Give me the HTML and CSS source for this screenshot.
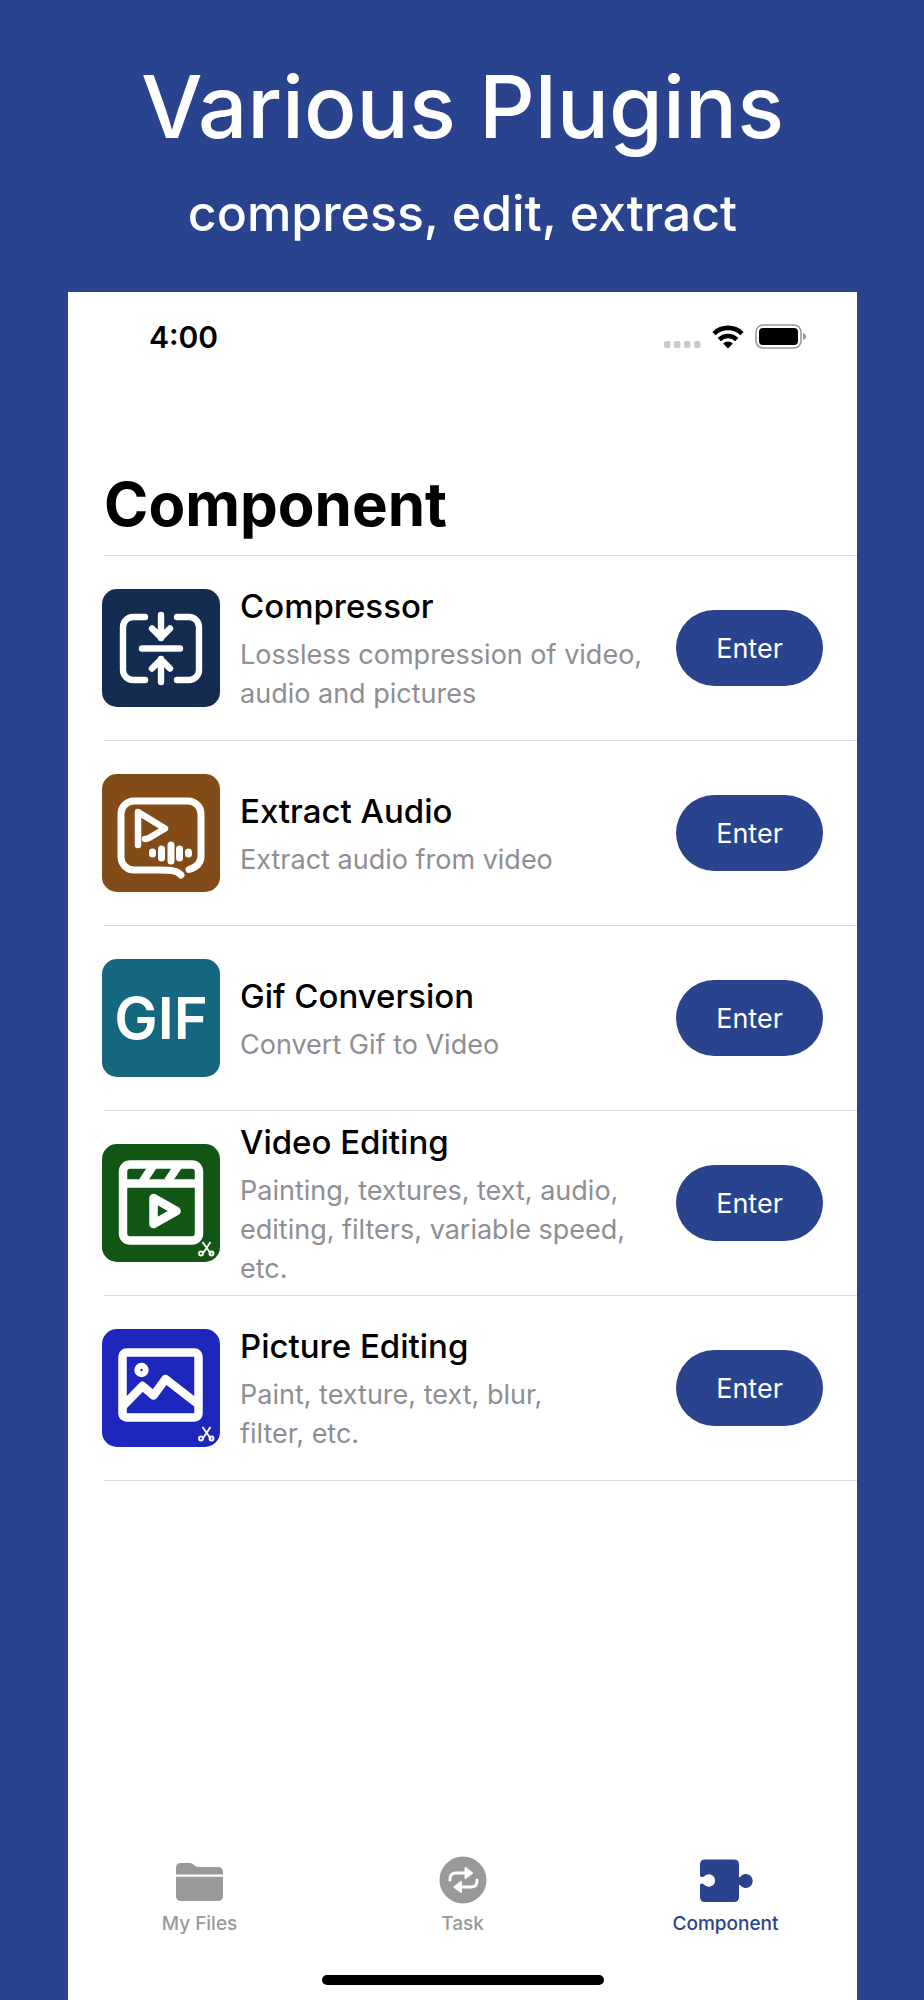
FILE: index.html
```html
<!DOCTYPE html>
<html lang="en">

<head>
    <meta charset="UTF-8">
    <meta name="viewport" content="width=device-width, initial-scale=1.0">
    <title>Various Plugins</title>
    <link rel="stylesheet" href="styles.css">
</head>

<body>
    <header class="banner">
        <h1>Various Plugins</h1>
        <p>compress, edit, extract</p>
    </header>

    <div class="phone">
        <div class="status">
            <span class="time">4:00</span>
            <svg class="signal" width="37" height="8" viewBox="0 0 37 8" fill="#cacaca">
                <rect x="0" y="0" width="6.500" height="7" rx="2" />
                <rect x="10" y="0" width="6.500" height="7" rx="2" />
                <rect x="20" y="0" width="6.500" height="7" rx="2" />
                <rect x="30" y="0" width="6.500" height="7" rx="2" />
            </svg>
            <svg width="32" height="24" viewBox="0 0 32 24" fill="none" stroke="#000" stroke-width="4.6">
                <path d="M2 8.6a20 20 0 0 1 28 0" />
                <path d="M7.3 14.6a12.4 12.4 0 0 1 17.4 0" />
                <path d="M16 23.4l-4.9-4.8a7 7 0 0 1 9.8 0z" fill="#000" stroke="none" />
            </svg>
            <svg width="52" height="26" viewBox="0 0 52 26">
                <rect x="1" y="1" width="45" height="23" rx="7" fill="none" stroke="#999" stroke-width="1.6" />
                <rect x="4" y="4" width="39" height="17" rx="4" />
                <path d="M48 9q3 1 3 3.500t-3 3.500z" fill="#999" />
            </svg>
        </div>

        <main>
            <h2>Component</h2>
            <ul class="list">
                <li>
                    <svg class="icon navy" viewBox="0 0 118 118" fill="none" stroke="#fff" stroke-width="6.400" stroke-linecap="round" stroke-linejoin="round">
                        <path d="M43 28H31a10 10 0 0 0-10 10v43a10 10 0 0 0 10 10h12M75 28h12a10 10 0 0 1 10 10v43a10 10 0 0 1-10 10H75" />
                        <path d="M40 59.500h38M59 26v23M50 39.500l9 9 9-9M59 93V70M50 79.500l9-9 9 9" />
                    </svg>
                    <div class="info">
                        <h3>Compressor</h3>
                        <p>Lossless compression of video, audio and pictures</p>
                    </div>
                    <button>Enter</button>
                </li>
                <li>
                    <svg class="icon brown" viewBox="0 0 118 118" fill="none" stroke="#fff" stroke-width="7" stroke-linecap="round" stroke-linejoin="round">
                        <path d="M79 101c-4-5-12-5-22-5H32a13 13 0 0 1-13-13V40a13 13 0 0 1 13-13h54a13 13 0 0 1 13 13v42q0 10-12 13.500" />
                        <path d="M36 71V38l27 16.500L47 64q-3 1-4 1" stroke-width="6.500" />
                        <path d="M50.500 78v2M59.500 75v9M69 71v16M77.500 75v9M86.500 78v2" />
                    </svg>
                    <div class="info">
                        <h3>Extract Audio</h3>
                        <p>Extract audio from video</p>
                    </div>
                    <button>Enter</button>
                </li>
                <li>
                    <div class="icon teal">GIF</div>
                    <div class="info">
                        <h3>Gif Conversion</h3>
                        <p>Convert Gif to Video</p>
                    </div>
                    <button>Enter</button>
                </li>
                <li>
                    <svg class="icon green" viewBox="0 0 118 118" fill="none" stroke="#fff" stroke-width="8.500" stroke-linejoin="round">
                        <rect x="21" y="20.500" width="76" height="76" rx="7" />
                        <path d="M21 39.500h76" />
                        <path d="M41 37l10-15M66 37l10-15" />
                        <path d="M51.500 54v26l23-13z" />
                        <g stroke-width="1.800">
                            <path d="M100.500 98l8.500 12M108.500 98l-8 12" />
                            <circle cx="99" cy="109.500" r="2" />
                            <circle cx="109.500" cy="109.500" r="2" />
                        </g>
                    </svg>
                    <div class="info">
                        <h3>Video Editing</h3>
                        <p>Painting, textures, text, audio, editing, filters, variable speed, etc.</p>
                    </div>
                    <button>Enter</button>
                </li>
                <li>
                    <svg class="icon blue" viewBox="0 0 118 118" fill="none" stroke="#fff" stroke-width="8.500" stroke-linejoin="round">
                        <rect x="20.500" y="23.500" width="76" height="65" rx="4" />
                        <circle cx="39.500" cy="41" r="4.200" stroke-width="6" />
                        <path d="M21 77l19.500-20 11 9.500L63.500 50 97 76" />
                        <g stroke-width="1.800">
                            <path d="M100.500 98l8.500 12M108.500 98l-8 12" />
                            <circle cx="99" cy="109.500" r="2" />
                            <circle cx="109.500" cy="109.500" r="2" />
                        </g>
                    </svg>
                    <div class="info">
                        <h3>Picture Editing</h3>
                        <p>Paint, texture, text, blur,<br>filter, etc.</p>
                    </div>
                    <button>Enter</button>
                </li>
            </ul>
        </main>

        <nav class="tabs">
            <a href="#">
                <svg width="54" height="48" viewBox="0 0 54 48" fill="#999">
                    <path d="M3 18.500V12q0-5 5-5h9q2 0 4 2t4 2h20q5 0 5 5v2.500zM3 20.800h47V40q0 5-5 5H8q-5 0-5-5z" />
                </svg>
                My Files
            </a>
            <a href="#">
                <svg width="54" height="48" viewBox="0 0 54 48">
                    <circle cx="27" cy="24" r="23.500" fill="#999" />
                    <path d="M14 24v-1q0-6 6-6h10M41 24v1q0 6-6 6H25" fill="none" stroke="#fff" stroke-width="3" stroke-linecap="round" />
                    <path d="M29.500 12v10l6.500-5zM25 26v10l-6.500-5z" fill="#fff" stroke="#fff" stroke-width="2" stroke-linejoin="round" />
                </svg>
                Task
            </a>
            <a href="#" class="active">
                <svg width="54" height="48" viewBox="0 0 54 48" fill="#2a438e">
                    <path d="M6 3.500h29q5 0 5 5v12q0 1 1 .5a7 7 0 1 1 0 8q-1-.5-1 .5v11.500q0 5-5 5H6q-5 0-5-5V29q1-2.500 4-.500a6.300 6.300 0 1 0 0-8q-3 1.500-4-1V8.500q0-5 5-5z" />
                </svg>
                Component
            </a>
        </nav>
        <div class="home-bar"></div>
    </div>
</body>

</html>
```
FILE: styles.css
```css
* {
    margin: 0;
    padding: 0;
    box-sizing: border-box;
}

body {
    display: flex;
    flex-direction: column;
    min-height: 100vh;
    padding: 0 67px 0 68px;
    background-color: #2a438e;
    font-family: Inter, "Noto Sans", sans-serif;
}

.banner {
    height: 292px;
    padding-top: 55px;
    color: #fff;
    text-align: center;
}

.banner h1 {
    font-size: 87px;
    line-height: 104px;
    font-weight: 500;
}

.banner p {
    margin-top: 22px;
    font-size: 50px;
    line-height: 64px;
    font-weight: 500;
}

.phone {
    flex: 1;
    display: flex;
    flex-direction: column;
    background-color: #fff;
}

/* status bar */
.status {
    display: flex;
    align-items: center;
    gap: 11px;
    padding: 24px 50px 0 81px;
    height: 66px;
}

.time {
    margin-right: auto;
    font-size: 30px;
    font-weight: 600;
}

.signal {
    margin-top: 16px;
}

main {
    flex: 1;
    padding-left: 36px;
}

h2 {
    margin-top: 110px;
    padding-bottom: 15px;
    border-bottom: 1px solid #ddd;
    font-size: 60px;
    line-height: 72px;
    font-weight: 700;
}

.list {
    list-style: none;
}

.list li {
    display: flex;
    align-items: center;
    height: 185px;
    padding-right: 34px;
    border-bottom: 1px solid #ddd;
}

.icon {
    flex: none;
    width: 118px;
    height: 118px;
    margin-left: -2px;
    border-radius: 15px;
}

.navy {
    background-color: #132c50;
}

.brown {
    background-color: #824b17;
}

.teal {
    background-color: #14677e;
    color: #fff;
    font-size: 58px;
    line-height: 118px;
    font-weight: 600;
    text-align: center;
}

.green {
    background-color: #115615;
}

.blue {
    background-color: #1d27bd;
}

.info {
    flex: 1;
    padding: 0 24px 0 20px;
}

h3 {
    margin-bottom: 6px;
    font-size: 33px;
    line-height: 46px;
    font-weight: 500;
}

.info p {
    color: #8e8e93;
    font-size: 27px;
    line-height: 39px;
}

.list button {
    width: 147px;
    height: 76px;
    border: 0;
    border-radius: 38px;
    background-color: #2a438e;
    color: #fff;
    font-family: inherit;
    font-size: 27px;
}

/* bottom tabs */
.tabs {
    display: grid;
    grid-template-columns: 1fr 1fr 1fr;
}

.tabs a {
    display: flex;
    flex-direction: column;
    align-items: center;
    gap: 8px;
    color: #999;
    font-size: 19px;
    line-height: 24px;
    font-weight: 500;
    text-decoration: none;
}

.tabs .active {
    color: #2a438e;
}

.home-bar {
    width: 282px;
    height: 10px;
    margin: 39px auto 15px;
    border-radius: 5px;
    background-color: #000;
}
```
